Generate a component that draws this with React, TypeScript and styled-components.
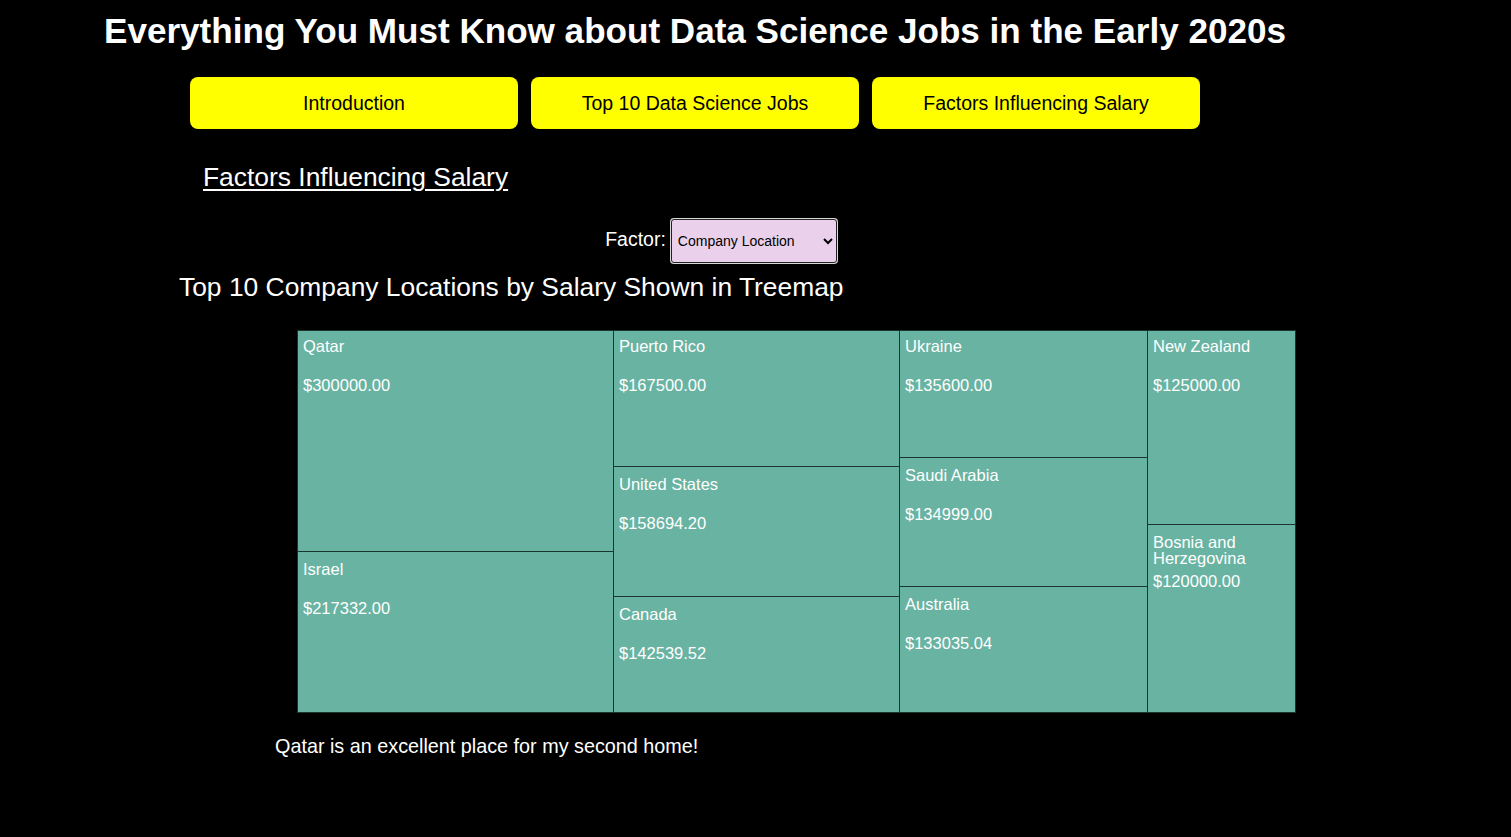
import React from "react";
import styled, { createGlobalStyle } from "styled-components";

const Global = createGlobalStyle`
  html, body { margin: 0; padding: 0; background: #000; }
  body { font-family: "Liberation Sans", Arial, sans-serif; color: #fff; }
`;

const Page = styled.div`
  width: 1390px;
  min-height: 837px;
  display: flex;
  flex-direction: column;
`;

const Title = styled.h1`
  margin: 11px 0 0;
  font-size: 35.1px;
  line-height: 40px;
  font-weight: bold;
  text-align: center;
  color: #fff;
`;

const Nav = styled.nav`
  display: flex;
  justify-content: center;
  gap: 13px;
  margin-top: 26px;
`;

const NavButton = styled.button`
  width: 328px;
  height: 52px;
  background: #ffff00;
  border: none;
  border-radius: 8px;
  color: #000;
  font-family: "Liberation Sans", Arial, sans-serif;
  font-size: 19.5px;
  cursor: pointer;
`;

const SectionTitle = styled.h2`
  margin: 33px 0 0 203px;
  font-size: 26.4px;
  line-height: 30px;
  font-weight: normal;
  text-decoration: underline;
  text-underline-offset: 3px;
  text-decoration-thickness: 2px;
`;

const FactorRow = styled.div`
  display: flex;
  align-items: center;
  justify-content: center;
  gap: 5px;
  margin-top: 27px;
  padding-left: 52px;
`;

const FactorLabel = styled.label`
  font-size: 19.5px;
  margin-top: -3px;
`;

const Select = styled.select`
  width: 166px;
  height: 44px;
  background: #ead0ea;
  color: #000;
  border: 1px solid #222;
  border-radius: 3px;
  box-shadow: 0 0 0 1px #d8d8d8;
  font-family: "Liberation Sans", Arial, sans-serif;
  font-size: 14px;
  padding: 0 2px;
`;

const ChartTitle = styled.h3`
  margin: 10px 0 0 179px;
  font-size: 26.4px;
  line-height: 28px;
  font-weight: normal;
`;

const Treemap = styled.div`
  position: relative;
  width: 999px;
  height: 383px;
  margin: 29px 0 0 297px;
`;

const Node = styled.div<{ $top: boolean }>`
  position: absolute;
  box-sizing: border-box;
  background: #69b3a2;
  border: 1px solid #1b352f;
  padding: ${(p) => (p.$top ? "7px" : "9px")} 5px 0;
  color: #fff;
  font-size: 16.5px;
  line-height: 16px;
  overflow: hidden;
`;

const NodeName = styled.div`
  min-height: 32px;
`;

const NodeValue = styled.div`
  margin-top: 7px;
`;

const Caption = styled.p`
  margin: 22px 0 0 275px;
  font-size: 19.8px;
  line-height: 23px;
`;

type Cell = { name: string; value: string; x: number; y: number; w: number; h: number };

const cells: Cell[] = [
  { name: "Qatar", value: "$300000.00", x: 0, y: 0, w: 317, h: 222 },
  { name: "Israel", value: "$217332.00", x: 0, y: 221, w: 317, h: 162 },
  { name: "Puerto Rico", value: "$167500.00", x: 316, y: 0, w: 287, h: 137 },
  { name: "United States", value: "$158694.20", x: 316, y: 136, w: 287, h: 131 },
  { name: "Canada", value: "$142539.52", x: 316, y: 266, w: 287, h: 117 },
  { name: "Ukraine", value: "$135600.00", x: 602, y: 0, w: 249, h: 128 },
  { name: "Saudi Arabia", value: "$134999.00", x: 602, y: 127, w: 249, h: 130 },
  { name: "Australia", value: "$133035.04", x: 602, y: 256, w: 249, h: 127 },
  { name: "New Zealand", value: "$125000.00", x: 850, y: 0, w: 149, h: 195 },
  { name: "Bosnia and Herzegovina", value: "$120000.00", x: 850, y: 194, w: 149, h: 189 },
];

export default function App() {
  return (
    <>
      <Global />
      <Page>
        <Title>Everything You Must Know about Data Science Jobs in the Early 2020s</Title>
        <Nav>
          <NavButton>Introduction</NavButton>
          <NavButton>Top 10 Data Science Jobs</NavButton>
          <NavButton>Factors Influencing Salary</NavButton>
        </Nav>
        <SectionTitle>Factors Influencing Salary</SectionTitle>
        <FactorRow>
          <FactorLabel htmlFor="factor">Factor:</FactorLabel>
          <Select id="factor" defaultValue="location">
            <option value="location">Company Location</option>
            <option value="size">Company Size</option>
            <option value="experience">Experience Level</option>
          </Select>
        </FactorRow>
        <ChartTitle>Top 10 Company Locations by Salary Shown in Treemap</ChartTitle>
        <Treemap>
          {cells.map((c) => (
            <Node
              key={c.name}
              $top={c.y === 0}
              style={{ left: c.x, top: c.y, width: c.w, height: c.h }}
            >
              <NodeName>{c.name}</NodeName>
              <NodeValue>{c.value}</NodeValue>
            </Node>
          ))}
        </Treemap>
        <Caption>Qatar is an excellent place for my second home!</Caption>
      </Page>
    </>
  );
}
